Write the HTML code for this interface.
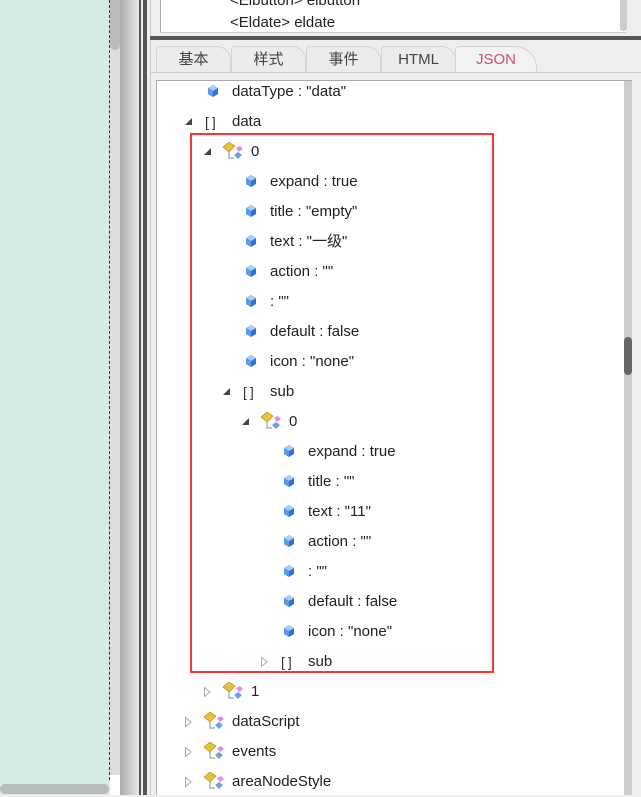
<!DOCTYPE html>
<html><head><meta charset="utf-8">
<style>
*{margin:0;padding:0;box-sizing:border-box}
body{width:641px;height:795px;overflow:hidden;position:relative;background:#eee;font-family:"Liberation Sans","Noto Sans CJK SC",sans-serif;font-size:15px;color:#222}
.a{position:absolute}
.row{position:absolute;height:30px;line-height:30px;white-space:nowrap}
.tab{position:absolute;top:46px;height:26px;border:1px solid #d4d4d4;border-bottom:none;border-radius:4px 14px 0 0;background:#ececec;text-align:center;line-height:26px;font-size:15px;color:#444}
</style></head><body>
<div class="a" style="left:0;top:0;width:110px;height:795px;background:#d5ece4"></div>
<div class="a" style="left:109px;top:0;width:0;height:780px;border-left:1px dashed #333"></div>
<div class="a" style="left:110px;top:0;width:10px;height:795px;background:#ddd"></div>
<div class="a" style="left:110px;top:0;width:10px;height:50px;background:#bbb;border-radius:0 0 5px 5px"></div>
<div class="a" style="left:110px;top:775px;width:10px;height:20px;background:#fff"></div>
<div class="a" style="left:0;top:784px;width:109px;height:10px;background:#bbb;border-radius:5px"></div>
<div class="a" style="left:120px;top:0;width:19px;height:795px;background:linear-gradient(90deg,#aaa,#e8e8e8)"></div>
<div class="a" style="left:139px;top:0;width:2px;height:795px;background:#555"></div>
<div class="a" style="left:143px;top:0;width:4px;height:795px;background:#555"></div>
<div class="a" style="left:150px;top:0;width:1px;height:795px;background:#ccc"></div>
<div class="a" style="left:160px;top:0;width:466px;height:33px;background:#fff;border-left:1px solid #aaa;border-bottom:1px solid #ccc"></div>
<div class="a" style="left:620px;top:0;width:7px;height:31px;background:#ccc;border-radius:0 0 3px 3px"></div>
<div class="row" style="left:230px;top:-14px">&lt;Elbutton&gt; elbutton</div>
<div class="row" style="left:230px;top:8px">&lt;Eldate&gt; eldate</div>
<div class="a" style="left:150px;top:36px;width:491px;height:4px;background:#555"></div>
<div class="tab" style="left:156px;width:75px">基本</div>
<div class="tab" style="left:231px;width:75px">样式</div>
<div class="tab" style="left:306px;width:75px">事件</div>
<div class="tab" style="left:381px;width:75px">HTML</div>
<div class="tab" style="left:455px;width:82px;background:#f2f2f2;color:#d0506a;border-radius:4px 22px 0 0">JSON</div>
<div class="a" style="left:150px;top:72px;width:491px;height:1px;background:#ccc"></div>
<div class="a" style="left:156px;top:80px;width:476px;height:715px;background:#fff;border-left:1px solid #aaa;border-top:1px solid #aaa"></div>
<div class="a" style="left:624px;top:81px;width:8px;height:714px;background:#ccc"></div>
<div class="a" style="left:624px;top:337px;width:8px;height:38px;background:#666;border-radius:4px"></div>
<div class="a" style="left:190px;top:133px;width:304px;height:540px;border:2px solid #f33"></div>
<svg width="0" height="0" style="position:absolute">
<defs>
<g id="cube"><path d="M5 0 L10 3 L10 9 L5 12 L0 9 L0 3Z" fill="#2f6fd6"/><path d="M5 0 L10 3 L5 6 L0 3Z" fill="#a9cdf5"/><path d="M0 3 L5 6 L5 12 L0 9Z" fill="#5a9ae8"/></g>
<g id="obj"><path d="M1 5 L7 0 L13 4 L7 10Z" fill="#e6c13a" stroke="#b08a10" stroke-width=".6"/><path d="M14 6 L18 4 L21 7 L17 10Z" fill="#e58ae6"/><path d="M12 13 L16 10 L20 13 L16 17Z" fill="#6aa0e8"/><path d="M7 10 V16 H12" stroke="#888" fill="none"/></g>
<g id="down"><path d="M0 7 L7 0 L7 7Z" fill="#444"/></g>
<g id="right"><path d="M0.5 0.5 L6 5 L0.5 9.5Z" fill="none" stroke="#aaa"/></g>
</defs></svg>
<div id="tree"></div>
<script>
var rows=[
[0,'p','dataType : "data"'],
[0,'ad','data'],
[1,'od','0'],
[2,'p','expand : true'],[2,'p','title : "empty"'],[2,'p','text : "一级"'],[2,'p','action : ""'],[2,'p',': ""'],[2,'p','default : false'],[2,'p','icon : "none"'],
[2,'ad','sub'],
[3,'od','0'],
[4,'p','expand : true'],[4,'p','title : ""'],[4,'p','text : "11"'],[4,'p','action : ""'],[4,'p',': ""'],[4,'p','default : false'],[4,'p','icon : "none"'],
[4,'ar','sub'],
[1,'or','1'],
[0,'or','dataScript'],[0,'or','events'],[0,'or','areaNodeStyle']];
var h='';
rows.forEach(function(r,i){
 var L=r[0]*19, y=77+i*30, t=r[1];
 var tx=232+L;
 if(t=='p'){h+='<svg class="a" style="left:'+(208+L)+'px;top:'+(y+8)+'px" width="10" height="12"><use href="#cube"/></svg>';}
 else{
  var ax=185+L;
  if(t[1]=='d')h+='<svg class="a" style="left:'+ax+'px;top:'+(y+11)+'px" width="8" height="8"><use href="#down"/></svg>';
  else h+='<svg class="a" style="left:'+ax+'px;top:'+(y+10)+'px" width="7" height="10"><use href="#right"/></svg>';
  if(t[0]=='a')h+='<div class="row" style="left:'+(205+L)+'px;top:'+y+'px;font-size:14px;color:#333;letter-spacing:3px">[]</div>';
  else h+='<svg class="a" style="left:'+(203+L)+'px;top:'+(y+5)+'px" width="22" height="18"><use href="#obj"/></svg>';
 }
 h+='<div class="row" style="left:'+tx+'px;top:'+y+'px">'+r[2]+'</div>';
});
document.getElementById('tree').innerHTML=h;
</script>
</body></html>
